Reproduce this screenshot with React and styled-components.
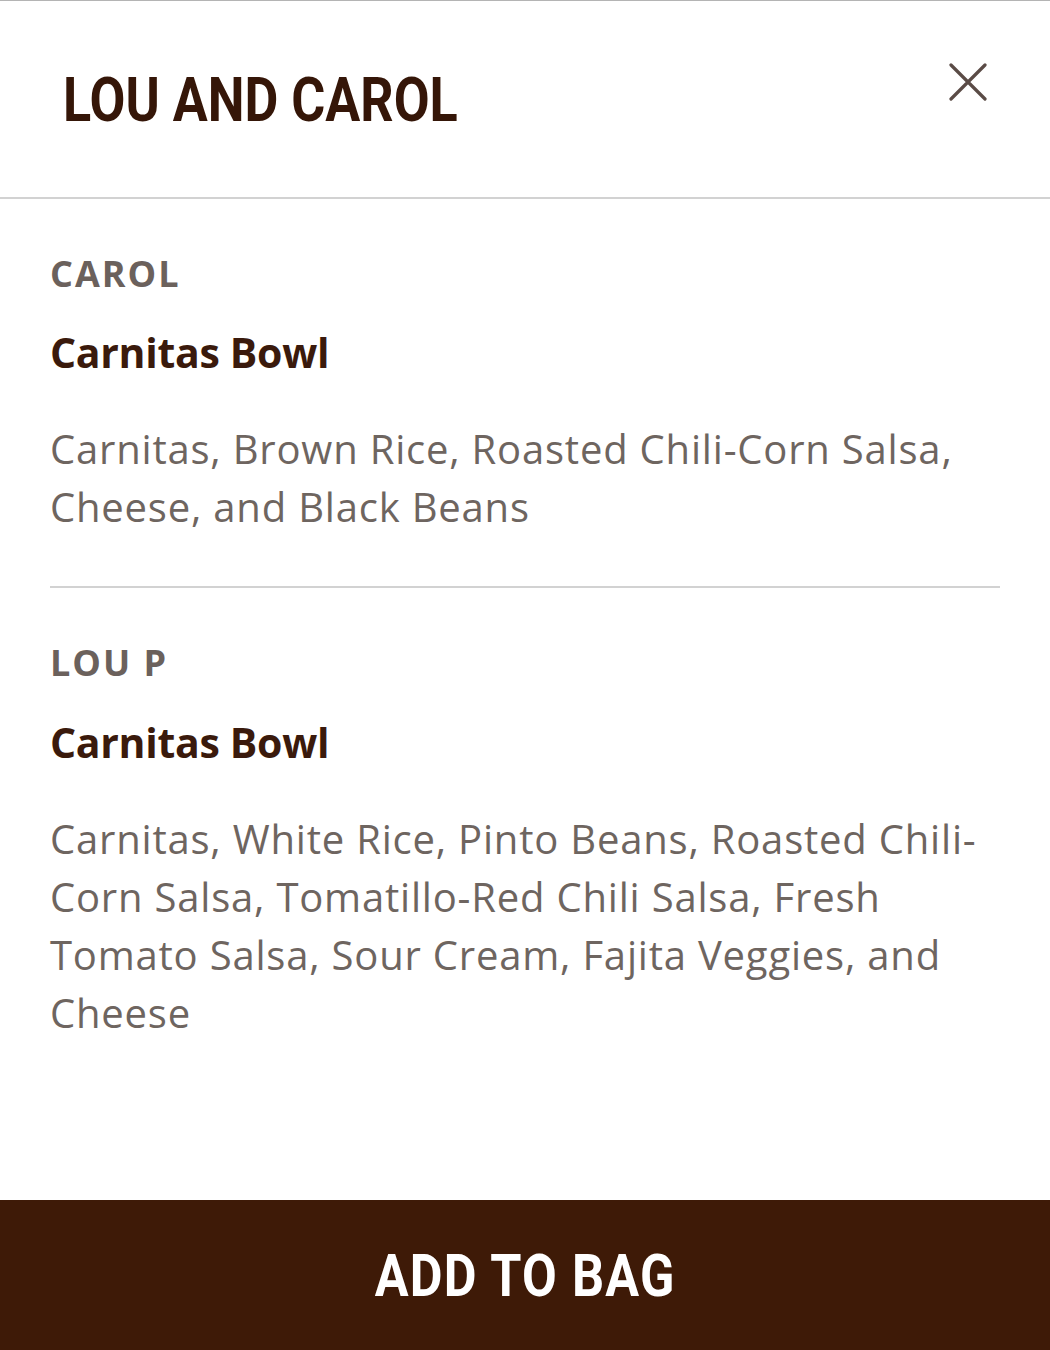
import React from "react";
import styled, { createGlobalStyle } from "styled-components";

const GlobalStyle = createGlobalStyle`
  html, body {
    margin: 0;
    padding: 0;
    background: #fff;
  }
  * {
    box-sizing: border-box;
  }
`;

const orders = [
  {
    id: "carol",
    name: "CAROL",
    meal: "Carnitas Bowl",
    items:
      "Carnitas, Brown Rice, Roasted Chili-Corn Salsa, Cheese, and Black Beans",
  },
  {
    id: "lou",
    name: "LOU P",
    meal: "Carnitas Bowl",
    items:
      "Carnitas, White Rice, Pinto Beans, Roasted Chili-Corn Salsa, Tomatillo-Red Chili Salsa, Fresh Tomato Salsa, Sour Cream, Fajita Veggies, and Cheese",
  },
];

const CloseIcon = ({ size = 38 }) => (
  <svg width={size} height={size} viewBox="0 0 38 38" fill="none">
    <path
      d="M2 2 L36 36 M36 2 L2 36"
      stroke="currentColor"
      strokeWidth="3.2"
      strokeLinecap="round"
    />
  </svg>
);

export default function App() {
  return (
    <>
      <GlobalStyle />
      <Sheet>
        <Header>
          <Title>
            <Condensed>LOU AND CAROL</Condensed>
          </Title>
          <CloseButton aria-label="Close">
            <CloseIcon />
          </CloseButton>
        </Header>
        <Content>
          {orders.map((order) => (
            <Order key={order.id}>
              <Person>{order.name}</Person>
              <Meal>{order.meal}</Meal>
              <Ingredients>{order.items}</Ingredients>
            </Order>
          ))}
        </Content>
        <AddButton>
          <Condensed $origin="center">ADD TO BAG</Condensed>
        </AddButton>
      </Sheet>
    </>
  );
}

const Sheet = styled.div`
  display: flex;
  flex-direction: column;
  width: 1050px;
  height: 1350px;
  border-top: 1px solid #b4b4b4;
  background: #fff;
  font-family: "Open Sans", "Noto Sans", sans-serif;
`;

const Header = styled.header`
  display: flex;
  align-items: center;
  justify-content: space-between;
  height: 198px;
  padding: 0 63px 18px 63px;
  border-bottom: 2px solid #d2d2d2;
`;

// no condensed face is installed, so squeeze a bold grotesque instead
const Condensed = styled.span`
  display: inline-block;
  transform: scaleX(0.84);
  transform-origin: ${(p) => p.$origin || "left"} center;
`;

const Title = styled.h1`
  margin: 0;
  font-family: "Roboto", sans-serif;
  font-size: 62px;
  font-weight: 700;
  color: #351608;
  line-height: 1.1;
  white-space: nowrap;
  transform: translateY(10px);
`;

const CloseButton = styled.button`
  display: flex;
  align-items: center;
  justify-content: center;
  width: 38px;
  height: 38px;
  padding: 0;
  border: none;
  background: none;
  color: #5a4b46;
  cursor: pointer;
  transform: translateY(-8px);
`;

const Content = styled.main`
  flex: 1;
  padding: 0 50px;
`;

const Order = styled.section`
  padding: 53px 0 50px;
  border-bottom: 2px solid #d2d2d2;

  &:last-child {
    border-bottom: none;
  }
`;

const Person = styled.div`
  font-size: 36px;
  font-weight: 700;
  line-height: 1.2;
  letter-spacing: 2px;
  color: #6b615c;
`;

const Meal = styled.div`
  margin-top: 33px;
  font-size: 41px;
  font-weight: 700;
  line-height: 1.2;
  letter-spacing: -0.3px;
  color: #3a1a0c;
`;

const Ingredients = styled.p`
  margin: 43px 0 0;
  font-size: 40px;
  line-height: 58px;
  letter-spacing: 0.8px;
  color: #6e6560;
`;

const AddButton = styled.button`
  display: flex;
  align-items: center;
  justify-content: center;
  height: 150px;
  width: 100%;
  border: none;
  background: #3e1a07;
  color: #fff;
  font-family: "Roboto", sans-serif;
  font-size: 60px;
  font-weight: 700;
  letter-spacing: 1.5px;
  white-space: nowrap;
  cursor: pointer;
`;
